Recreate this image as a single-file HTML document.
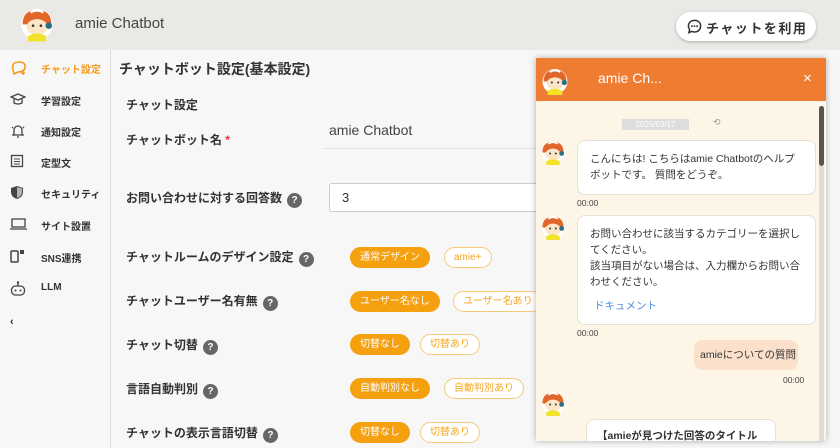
<!DOCTYPE html>
<html><head><meta charset="utf-8"><style>
*{box-sizing:border-box;margin:0;padding:0}
body{width:840px;height:448px;overflow:hidden;background:#f7f7f7;font-family:"Liberation Sans","Noto Sans CJK JP",sans-serif;color:#333;position:relative}
.hdr{position:absolute;left:0;top:0;width:840px;height:50px;background:#ebe9e6}
.hdr .t{position:absolute;left:75px;top:15px;font-size:15px;color:#444}
.btn{position:absolute;left:676px;top:12px;width:140px;height:29px;background:#fff;border-radius:15px;box-shadow:0 1px 3px rgba(0,0,0,.25);font-size:13px;font-weight:bold;color:#333;letter-spacing:1.5px;padding:6px 0 0 30px;white-space:nowrap}
.side{position:absolute;left:0;top:50px;width:111px;height:398px;background:#f7f7f7;border-right:1px solid #ddd}
.si{position:absolute;left:10px;font-size:10px;font-weight:bold;color:#333}
.si span{position:absolute;left:31px;top:1px;white-space:nowrap}
.lbl{position:absolute;font-size:12px;font-weight:bold;color:#333;white-space:nowrap}
.q{display:inline-block;width:15px;height:15px;border-radius:50%;background:#666;color:#fff;font-size:10px;text-align:center;line-height:15px;vertical-align:-1px;margin-left:5px}
.pill{position:absolute;height:21px;border-radius:11px;font-size:10px;line-height:19px;padding:0 9px;white-space:nowrap;border:1px solid #f5a623}
.on{background:#f5a00f;color:#fff;border-color:#f5a00f}
.off{background:#fff;color:#f5a623;border-color:#f7c97a}
.chat{position:absolute;left:536px;top:58px;width:290px;height:383px;background:#fdf5e6;box-shadow:0 0 6px rgba(0,0,0,.3);overflow:hidden}
.ch{height:43px;background:#ef7d31;position:relative}
.bub{position:absolute;background:#fff;border:1px solid #e6e0d6;border-radius:8px;font-size:10.5px;line-height:16px;color:#333}
.tm{position:absolute;font-size:8.5px;color:#444}
.av{position:absolute;width:26px;height:26px}
</style></head><body>
<svg width="0" height="0" style="position:absolute"><defs>
<g id="ava"><circle cx="13" cy="13" r="12" fill="#fff"/><path d="M2 13 Q2 2 13 2 Q24 2 24 13 Z" fill="#e0662a"/><ellipse cx="13" cy="15" rx="8" ry="6" fill="#fde6c8"/><path d="M6 22 Q13 18 20 22 L20 26 L6 26Z" fill="#f2e228"/><circle cx="10" cy="14" r="1" fill="#333"/><circle cx="16" cy="14" r="1" fill="#333"/><circle cx="22" cy="14" r="2.5" fill="#2a6e8a"/><path d="M8 4 Q13 1 18 4" stroke="#fff" stroke-width="1.5" fill="none"/></g>
</defs></svg>
<div class="hdr"><svg style="position:absolute;left:20px;top:7px" width="34" height="36" viewBox="0 0 26 27"><use href="#ava"/></svg><div class="t">amie Chatbot</div>
<div class="btn"><svg style="position:absolute;left:11px;top:7px" width="15" height="15" viewBox="0 0 16 16"><path d="M8 1.5C4 1.5 1.5 4 1.5 7.5c0 1.5.5 2.7 1.3 3.7L2 14.5l3.3-1.3c.8.4 1.7.6 2.7.6 4 0 6.5-2.6 6.5-6.3S12 1.5 8 1.5z" fill="none" stroke="#333" stroke-width="1.6"/><circle cx="5.2" cy="7.6" r="1" fill="#333"/><circle cx="8" cy="7.6" r="1" fill="#333"/><circle cx="10.8" cy="7.6" r="1" fill="#333"/></svg>チャットを利用</div></div>
<div class="side">
<div class="si" style="top:10px;color:#f59a1b"><svg width="18" height="16" viewBox="0 0 18 16"><path d="M3 10 Q1 2 9 2 Q16 2 15 8 Q14 12 8 12 L4 14 Z" fill="none" stroke="#f59a1b" stroke-width="1.6"/><path d="M13 11v4M11 13h4" stroke="#f59a1b" stroke-width="1.5"/></svg><span style="color:#f59a1b">チャット設定</span></div>
<div class="si" style="top:42px"><svg width="16" height="14" viewBox="0 0 16 14"><path d="M1 5 L8 2 L15 5 L8 8Z M4 7v4 Q8 13 12 11V7" fill="none" stroke="#444" stroke-width="1.3"/></svg><span>学習設定</span></div>
<div class="si" style="top:73px"><svg width="16" height="16" viewBox="0 0 16 16"><path d="M4 12V7a4 4 0 018 0v5M2 12h12M7 14h2M2 4l1 1M14 4l-1 1" fill="none" stroke="#444" stroke-width="1.3"/></svg><span>通知設定</span></div>
<div class="si" style="top:104px"><svg width="14" height="14" viewBox="0 0 14 14"><rect x="1.5" y="1.5" width="11" height="11" fill="none" stroke="#444" stroke-width="1.3"/><path d="M4 5h6M4 7.5h6M4 10h6" stroke="#444"/></svg><span>定型文</span></div>
<div class="si" style="top:135px"><svg width="14" height="15" viewBox="0 0 14 15"><path d="M7 1 L13 3 V7 Q13 12 7 14 Q1 12 1 7 V3Z" fill="#444"/><path d="M7 2 V13 Q12 11 12 7 V3.5Z" fill="#fff" opacity=".6"/></svg><span>セキュリティ</span></div>
<div class="si" style="top:167px"><svg width="17" height="14" viewBox="0 0 17 14"><rect x="2" y="2" width="13" height="8" fill="none" stroke="#444" stroke-width="1.3"/><path d="M0 12h17" stroke="#444" stroke-width="1.3"/></svg><span>サイト設置</span></div>
<div class="si" style="top:199px"><svg width="16" height="14" viewBox="0 0 16 14"><rect x="1" y="2" width="7" height="11" rx="1" fill="none" stroke="#444" stroke-width="1.5"/><rect x="10" y="1" width="4" height="4" fill="#444"/></svg><span>SNS連携</span></div>
<div class="si" style="top:231px"><svg width="16" height="15" viewBox="0 0 16 15"><rect x="1.5" y="5" width="13" height="9" rx="4" fill="none" stroke="#444" stroke-width="1.3"/><path d="M8 5V2" stroke="#444" stroke-width="1.3"/><circle cx="8" cy="1.5" r="1.2" fill="#444"/><circle cx="5.5" cy="9.5" r="1" fill="#444"/><circle cx="10.5" cy="9.5" r="1" fill="#444"/></svg><span>LLM</span></div>
<div class="si" style="top:266px;font-size:11px">‹</div>
</div>
<div class="lbl" style="left:119px;top:59px;font-size:14px">チャットボット設定(基本設定)</div>
<div class="lbl" style="left:126px;top:96px">チャット設定</div>
<div class="lbl" style="left:126px;top:131px">チャットボット名 <span style="color:#e33">*</span></div>
<div style="position:absolute;left:329px;top:122px;font-size:14px;color:#444">amie Chatbot</div>
<div style="position:absolute;left:322px;top:148px;width:220px;height:1px;background:#e2e2e2"></div>
<div class="lbl" style="left:126px;top:189px">お問い合わせに対する回答数<span class="q">?</span></div>
<div style="position:absolute;left:329px;top:183px;width:220px;height:29px;background:#fff;border:1px solid #ccc;border-radius:3px;font-size:13px;padding:6px 12px">3</div>
<div class="lbl" style="left:126px;top:248px">チャットルームのデザイン設定<span class="q">?</span></div>
<div class="lbl" style="left:126px;top:292px">チャットユーザー名有無<span class="q">?</span></div>
<div class="lbl" style="left:126px;top:336px">チャット切替<span class="q">?</span></div>
<div class="lbl" style="left:126px;top:380px">言語自動判別<span class="q">?</span></div>
<div class="lbl" style="left:126px;top:424px">チャットの表示言語切替<span class="q">?</span></div>
<div class="pill on" style="left:350px;top:247px">通常デザイン</div><div class="pill off" style="left:444px;top:247px">amie+</div>
<div class="pill on" style="left:350px;top:291px">ユーザー名なし</div><div class="pill off" style="left:453px;top:291px">ユーザー名あり</div>
<div class="pill on" style="left:350px;top:334px">切替なし</div><div class="pill off" style="left:420px;top:334px">切替あり</div>
<div class="pill on" style="left:350px;top:378px">自動判別なし</div><div class="pill off" style="left:444px;top:378px">自動判別あり</div>
<div class="pill on" style="left:350px;top:422px">切替なし</div><div class="pill off" style="left:420px;top:422px">切替あり</div>
<div class="chat">
<div class="ch"><svg style="position:absolute;left:5px;top:10px" width="28" height="28" viewBox="0 0 26 27"><use href="#ava"/></svg><div style="position:absolute;left:62px;top:12px;color:#fff;font-size:14px">amie Ch...</div><div style="position:absolute;left:267px;top:12px;color:#fff;font-size:15px">×</div></div>
<div style="position:absolute;left:86px;top:61px;width:67px;height:11px;background:#ddd;color:#fff;font-size:8px;text-align:center;line-height:11px">2025/03/17</div>
<div style="position:absolute;left:177px;top:59px;font-size:9px;color:#999">⟲</div>
<div style="position:absolute;left:283px;top:48px;width:5px;height:60px;background:#555;border-radius:3px"></div>
<div style="position:absolute;left:283px;top:108px;width:5px;height:275px;background:#ddd"></div>
<svg class="av" style="left:4px;top:82px" viewBox="0 0 26 27"><use href="#ava"/></svg>
<div class="bub" style="left:41px;top:82px;width:239px;height:55px;padding:10px 12px">こんにちは! こちらはamie Chatbotのヘルプボットです。 質問をどうぞ。</div>
<div class="tm" style="left:41px;top:140px">00:00</div>
<svg class="av" style="left:4px;top:157px" viewBox="0 0 26 27"><use href="#ava"/></svg>
<div class="bub" style="left:41px;top:157px;width:239px;height:110px;padding:10px 12px">お問い合わせに該当するカテゴリーを選択してください。<br>該当項目がない場合は、入力欄からお問い合わせください。<div style="color:#4a90d9;margin-top:8px;margin-left:4px">ドキュメント</div></div>
<div class="tm" style="left:41px;top:270px">00:00</div>
<div style="position:absolute;left:158px;top:282px;width:104px;height:30px;background:#fbe1cc;border-radius:8px;font-size:10.5px;padding:7px 6px;white-space:nowrap">amieについての質問</div>
<div class="tm" style="left:247px;top:317px">00:00</div>
<svg class="av" style="left:4px;top:333px" viewBox="0 0 26 27"><use href="#ava"/></svg>
<div class="bub" style="left:50px;top:361px;width:190px;height:40px;padding:8px 10px;font-weight:bold;font-size:10.5px;white-space:nowrap;overflow:hidden">【amieが見つけた回答のタイトル</div>
</div>
</body></html>
